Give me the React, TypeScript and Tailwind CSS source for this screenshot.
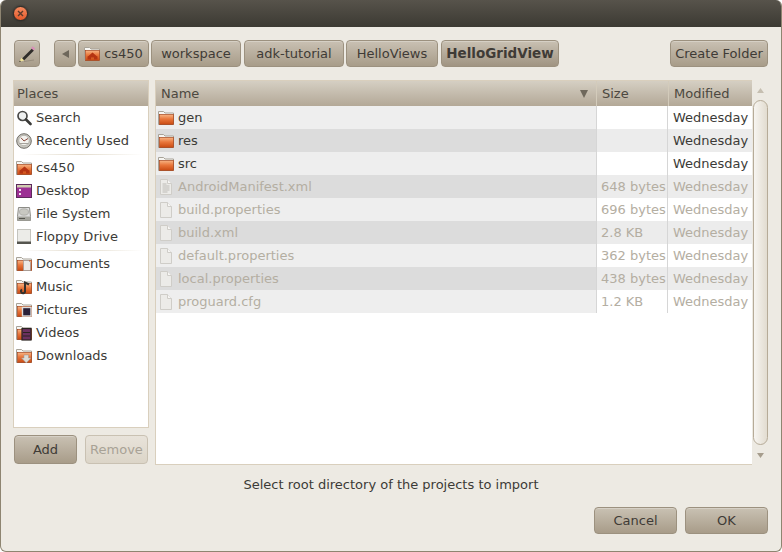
import React from "react";

const btnBase = "flex items-center justify-center whitespace-nowrap rounded-[4px] border border-[#9c917f] bg-gradient-to-b from-[#c9c1b3] to-[#a89c89] text-[#3f3b36] shadow-[inset_0_1px_0_rgba(255,255,255,0.25)]";
const btn = btnBase;

function Folder({ children }: { children?: React.ReactNode }) {
  return (
    <svg width="16" height="16" viewBox="0 0 16 16" className="shrink-0">
      <defs>
        <linearGradient id="fg" x1="0" y1="0" x2="0" y2="1">
          <stop offset="0" stopColor="#f7b585" />
          <stop offset="0.45" stopColor="#e9773c" />
          <stop offset="1" stopColor="#c94a12" />
        </linearGradient>
      </defs>
      <path d="M0.5 14.5V1.5h5l1.5 1.5h8.5v11.5z" fill="#f6f5f2" stroke="#a8a398" />
      <rect x="1.5" y="4.5" width="14" height="10" fill="url(#fg)" stroke="#a5431a" strokeWidth="0.7" />
      {children}
    </svg>
  );
}

const House = () => (
  <path d="M3.5 13.5V10.5l1-.5L8.5 6.5l4 3.5 1 .5v3h-3.5v-2h-3v2z" fill="#b53412" />
);

function FileIcon({ lines }: { lines?: boolean }) {
  return (
    <svg width="16" height="16" viewBox="0 0 16 16" className="shrink-0">
      <path d="M2.5 0.5h7l4 4v11h-11z" fill="#ecebe8" stroke="#cfcdc8" />
      <path d="M9.5 0.5v4h4" fill="#f7f6f4" stroke="#cfcdc8" />
      {lines && <path d="M4.5 5h4M4.5 7h7M4.5 9h7M4.5 11h7M4.5 13h5" stroke="#bdbbb6" strokeWidth="1" />}
    </svg>
  );
}

const SearchIcon = () => (
  <svg width="16" height="16" viewBox="0 0 16 16" className="shrink-0">
    <circle cx="6.5" cy="6" r="4.5" fill="#eef0f0" stroke="#4a4a48" strokeWidth="1.7" />
    <path d="M10 9.5l4.5 4.5" stroke="#3a3a38" strokeWidth="2.6" strokeLinecap="round" />
  </svg>
);
const ClockIcon = () => (
  <svg width="16" height="16" viewBox="0 0 16 16" className="shrink-0">
    <circle cx="8" cy="8" r="7.3" fill="#c9c7c0" stroke="#6f6d66" />
    <circle cx="8" cy="7.5" r="5.2" fill="#f3f2ee" stroke="#9a9891" strokeWidth="0.6" />
    <path d="M8 8L5 4.8M8 8l4-2.5" stroke="#7a3326" strokeWidth="0.9" />
    <path d="M3.5 10.5h9" stroke="#a5a39c" />
  </svg>
);
const DesktopIcon = () => (
  <svg width="16" height="16" viewBox="0 0 16 16" className="shrink-0">
    <rect x="0.5" y="1.5" width="15" height="13" fill="#9c2f94" stroke="#5e2a5c" />
    <rect x="1" y="2" width="14" height="2.5" fill="#cfcbb0" />
    <rect x="3" y="6" width="2" height="2" fill="#f0e3ef" />
    <rect x="3" y="10" width="2" height="2" fill="#f0e3ef" />
  </svg>
);
const DiskIcon = () => (
  <svg width="16" height="16" viewBox="0 0 16 16" className="shrink-0">
    <path d="M2.5 1.5h11l1 9v4h-13v-4z" fill="#dedede" stroke="#8c8c86" />
    <ellipse cx="8" cy="6" rx="4.5" ry="3.2" fill="#c8c8c2" stroke="#9c9c96" strokeWidth="0.6" />
    <rect x="1.5" y="10.5" width="13" height="4" fill="#a5a59e" />
    <path d="M3 12.5h6" stroke="#55554f" />
  </svg>
);
const FloppyIcon = () => (
  <svg width="16" height="16" viewBox="0 0 16 16" className="shrink-0">
    <rect x="1.5" y="0.5" width="13" height="14" fill="#ecece8" stroke="#c4c4be" />
    <rect x="1" y="12.5" width="14" height="2.5" fill="#55554f" />
  </svg>
);
const Pencil = () => (
  <svg width="18" height="18" viewBox="0 0 18 18">
    <path d="M4 13.5l10-10 2 2-10 10z" fill="#2f2d2a" />
    <path d="M13 3l1.7-1.7 2.6 2.4L15.6 5.6z" fill="#d98fb8" />
    <path d="M1 17l2.6-4.2 2.6 2.6z" fill="#efe29a" />
    <path d="M1 17l1-1.6 1 1z" fill="#222" />
    <path d="M6 16.5l10-1.5" stroke="#8f8574" strokeWidth="1" opacity="0.7" />
  </svg>
);

const Sep = () => (
  <div className="h-px mt-[2px] mb-[1px] mx-[5px] bg-gradient-to-r from-transparent via-[#e3dccd] to-transparent" />
);

function Place({ icon, label }: { icon: React.ReactNode; label: string }) {
  return (
    <div className="flex items-center h-[23px] pl-[2px] gap-[4px] text-[#3c3b37] whitespace-nowrap">
      {icon}
      <span>{label}</span>
    </div>
  );
}

const crumbs: [string, string][] = [
  ["workspace", "w-[90px] ml-[2px]"],
  ["adk-tutorial", "w-[100px] ml-[3px]"],
  ["HelloViews", "w-[92px] ml-[2px]"],
];

const files = [
  { n: "gen", s: "", dir: true },
  { n: "res", s: "", dir: true },
  { n: "src", s: "", dir: true },
  { n: "AndroidManifest.xml", s: "648 bytes", lines: true },
  { n: "build.properties", s: "696 bytes" },
  { n: "build.xml", s: "2.8 KB" },
  { n: "default.properties", s: "362 bytes" },
  { n: "local.properties", s: "438 bytes" },
  { n: "proguard.cfg", s: "1.2 KB" },
];

const hdr = "h-[25px] flex items-center bg-gradient-to-b from-[#d5cfc3] to-[#b3a897] text-[#4c4840]";

export default function App() {
  return (
    <div
      className="w-[782px] h-[552px] overflow-hidden bg-white text-[13px] leading-none"
      style={{ fontFamily: '"DejaVu Sans", sans-serif' }}
    >
      <div className="w-full h-full flex flex-col rounded-t-[6px] rounded-b-[6px] overflow-hidden bg-[#edeae3] border-x border-b border-[#8e8571]">
        {/* title bar */}
        <div className="h-[27px] shrink-0 -mx-px flex items-center pl-[13px] bg-gradient-to-b from-[#57534b] to-[#3c3a33]">
          <div className="w-[15px] h-[15px] rounded-full border border-[#2f2d29] bg-gradient-to-b from-[#f58a5e] to-[#e4592a] flex items-center justify-center shadow-[0_0_2px_#222]">
            <svg width="7" height="7" viewBox="0 0 7 7">
              <path d="M1 1l5 5M6 1l-5 5" stroke="#5a3a2c" strokeWidth="1.4" />
            </svg>
          </div>
        </div>

        <div className="flex-1 flex flex-col pl-[13px] pr-[13px] pt-[13px]">
          {/* path bar */}
          <div className="flex h-[27px] shrink-0">
            <div className={`${btnBase} w-[26px]`}><Pencil /></div>
            <div className={`${btnBase} w-[22px] ml-[14px]`}>
              <svg width="7" height="8" viewBox="0 0 7 8"><path d="M7 0v8L0 4z" fill="#6e675b" /></svg>
            </div>
            <div className={`${btnBase} w-[71px] ml-[2px] gap-[4px]`}>
              <Folder><House /></Folder>
              <span>cs450</span>
            </div>
            {crumbs.map(([t, c]) => (
              <div key={t} className={`${btn} ${c}`}>{t}</div>
            ))}
            <div className={`${btnBase} w-[118px] ml-[3px] font-bold text-[13.5px] from-[#b8ae9d] to-[#a09482] border-[#8e8472]`}>HelloGridView</div>
            <div className={`${btn} w-[98px] ml-auto`}>Create Folder</div>
          </div>

          {/* main */}
          <div className="flex h-[385px] shrink-0 mt-[13px] -ml-px">
            <div className="w-[136px] shrink-0 flex flex-col">
              <div className="h-[348px] border border-[#d9cfbd] bg-white">
                <div className={`${hdr} pl-[3px]`}>Places</div>
                <Place icon={<SearchIcon />} label="Search" />
                <Place icon={<ClockIcon />} label="Recently Used" />
                <Sep />
                <Place icon={<Folder><House /></Folder>} label="cs450" />
                <Place icon={<DesktopIcon />} label="Desktop" />
                <Place icon={<DiskIcon />} label="File System" />
                <Place icon={<FloppyIcon />} label="Floppy Drive" />
                <Sep />
                <Place icon={<Folder><path d="M7.5 4.5h5l2 2v8h-7z" fill="#eceae6" stroke="#999" strokeWidth="0.7" /></Folder>} label="Documents" />
                <Place icon={<Folder><path d="M9 12V3.5l4 2M9 12a2 2 0 1 1-3-1.5" stroke="#33312d" strokeWidth="2" fill="none" /></Folder>} label="Music" />
                <Place icon={<Folder><rect x="6.5" y="5.5" width="8.5" height="8.5" fill="#2a2038" stroke="#ddd" strokeWidth="1.4" /></Folder>} label="Pictures" />
                <Place icon={<Folder><rect x="6" y="3.5" width="9" height="11.5" fill="#6b3160" stroke="#2a2320" strokeWidth="1.2" /><path d="M7 7.5h7M7 11h7" stroke="#2a2320" /></Folder>} label="Videos" />
                <Place icon={<Folder><path d="M8 7h4.5v3h2.5l-4.7 5-4.8-5H8z" fill="#dddcd6" stroke="#999" strokeWidth="0.5" /></Folder>} label="Downloads" />
              </div>
              <div className="flex mt-[7px] pl-px gap-[8px]">
                <div className={`${btnBase} w-[63px] h-[29px]`}>Add</div>
                <div className="w-[63px] h-[29px] flex items-center justify-center rounded-[4px] border border-[#c9c1b2] bg-gradient-to-b from-[#e8e3da] to-[#dcd5c8] text-[#a8a296]">Remove</div>
              </div>
            </div>

            <div className="ml-[6px] flex-1 flex min-w-0">
              <div className="w-[597px] h-[385px] shrink-0 border border-[#d9cfbd] border-r-0 bg-white flex flex-col">
                <div className={hdr}>
                  <div className="w-[441px] h-full flex items-center justify-between pl-[5px] pr-[8px] border-r border-[#d3cbbb]">
                    <span>Name</span>
                    <svg width="8" height="8" viewBox="0 0 8 8"><path d="M0 0h8L4 8z" fill="#6f685c" /></svg>
                  </div>
                  <div className="w-[72px] h-full flex items-center pl-[5px] border-r border-[#d3cbbb]">Size</div>
                  <div className="flex-1 h-full flex items-center pl-[5px]">Modified</div>
                </div>
                {files.map((f, i) => (
                  <div key={f.n} className={`flex h-[23px] whitespace-nowrap ${f.dir ? "text-[#3c3b37]" : "text-[#b4aea2]"}`}>
                    <div className={`w-[441px] flex items-center pl-[2px] gap-[4px] ${i % 2 ? "bg-[#dcdcdc]" : "bg-[#eeeeee]"}`}>
                      {f.dir ? <Folder /> : <FileIcon lines={f.lines} />}
                      <span>{f.n}</span>
                    </div>
                    <div className={`w-[72px] flex items-center pl-[4px] border-x border-[#d6d6d6] -ml-px ${i % 2 ? "bg-[#ececec]" : "bg-white"}`}>{f.s}</div>
                    <div className={`flex-1 flex items-center pl-[5px] ${i % 2 ? "bg-[#ececec]" : "bg-white"}`}>Wednesday</div>
                  </div>
                ))}
              </div>
              {/* scrollbar */}
              <div className="flex-1 h-[385px] flex flex-col items-center pt-[8px] pl-px">
                <svg width="7" height="5" viewBox="0 0 7 5"><path d="M3.5 0L7 5H0z" fill="#c6bfb1" /></svg>
                <div className="w-[15px] h-[345px] mt-[7px] shrink-0 rounded-[8px] border border-[#b6ab98] bg-gradient-to-r from-[#f7f5f1] to-[#e2dcd0]" />
                <svg className="mt-[8px]" width="7" height="5" viewBox="0 0 7 5"><path d="M0 0h7L3.5 5z" fill="#a69d8d" /></svg>
              </div>
            </div>
          </div>

          <div className="text-center text-[#3c3b37] h-[14px] mt-[13px] whitespace-nowrap">Select root directory of the projects to import</div>

          <div className="flex justify-end gap-[8px] shrink-0 mt-[15px]">
            <div className={`${btn} w-[83px] h-[27px]`}>Cancel</div>
            <div className={`${btn} w-[83px] h-[27px] border-[#7d7463]`}>OK</div>
          </div>
        </div>
      </div>
    </div>
  );
}
